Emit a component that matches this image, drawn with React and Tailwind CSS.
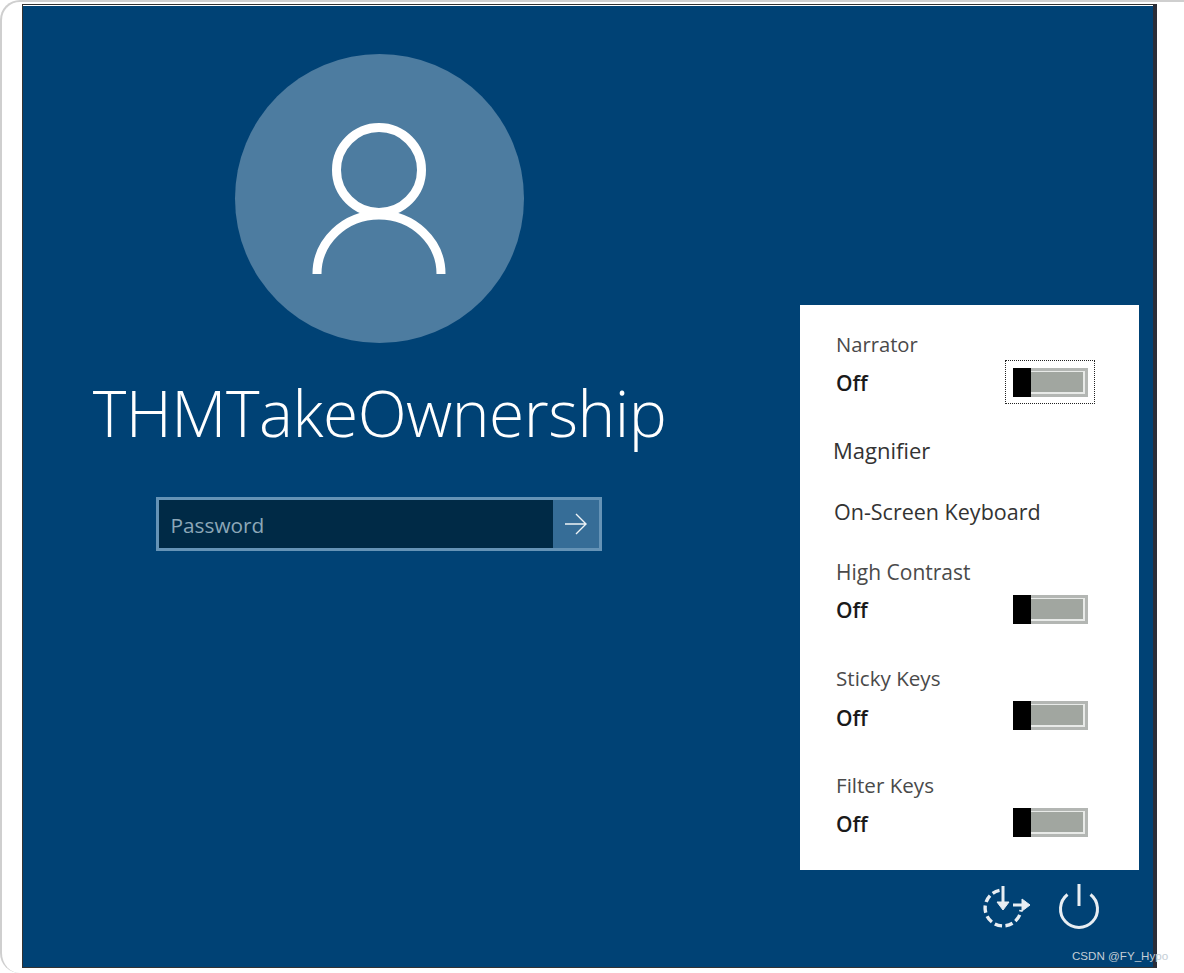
import React from "react";

function Toggle({ focus }) {
  return (
    <div className={"w-[90px] h-[44px] mb-[4px] flex items-center justify-center " + (focus ? "outline-1 outline-dotted outline-[#222] -outline-offset-[1px]" : "")}>
      <div className="relative w-[75px] h-[29px] border-[3px] border-[#b3b6b3] bg-[#e8eae8] p-[1.5px]">
        <div className="w-full h-full bg-[#a1a6a0]" />
        <div className="absolute -left-[3px] -top-[3px] w-[18px] h-[29px] bg-black" />
      </div>
    </div>
  );
}

function ToggleRow({ label, focus, className, labelClass, gapClass, offClass }) {
  return (
    <div className={"flex flex-col " + className}>
      <div className={"pl-[36px] leading-[28px] text-[#4a4a4a] " + labelClass}>{label}</div>
      <div className={"flex items-center justify-between pl-[36px] pr-[44px] h-[44px] " + gapClass}>
        <span className={"text-[21px] font-semibold text-[#1a1a1a] " + (offClass || "")}>Off</span>
        <Toggle focus={focus} />
      </div>
    </div>
  );
}

export default function App() {
  return (
    <div className="w-[1184px] h-[973px] bg-white overflow-hidden" style={{ fontFamily: '"Open Sans","Noto Sans",sans-serif' }}>
      <div className="h-[973px] rounded-l-[20px] border-l-[2px] border-t-[2px] border-[#cfcfcf] pl-[20px] pt-[2px]">
        <div className="w-[1135px] h-[964px] border-l border-t border-b border-r-[4px] border-l-[#333] border-t-[#333] border-b-[#333] border-r-[#2a2d38]">
          <div className="h-[1px] bg-white" />
          <div className="flex h-[961px] bg-[#004275]">
            <div className="w-[713px] flex flex-col items-center pt-[48px]">
              <div className="w-[289px] h-[289px] rounded-full bg-[#4d7ca0] flex items-center justify-center">
                <svg className="mr-[2px]" width="134" height="152" viewBox="0 0 134 152" fill="none" stroke="white" strokeWidth="9">
                  <circle cx="67" cy="47" r="42.5" />
                  <path d="M5 151 A62 59 0 0 1 129 151" />
                </svg>
              </div>
              <div className="mt-[28px] text-[64px] leading-[84px] font-light text-white tracking-[-0.5px] whitespace-nowrap">THMTakeOwnership</div>
              <div className="mt-[42px] mr-[2px] w-[446px] h-[54px] border-[3px] border-[#6593b6] flex">
                <div className="flex-1 bg-[#002a46] pl-[12px] pt-[4px] flex items-center text-[20.8px] text-[#8ca7b8]">Password</div>
                <div className="w-[46px] bg-[#366d97] flex items-center justify-center">
                  <svg width="26" height="24" viewBox="0 0 26 24" fill="none" stroke="#eef3f6" strokeWidth="1.4">
                    <path d="M2 12 H23 M13 2 L23 12 L13 22" />
                  </svg>
                </div>
              </div>
            </div>
            <div className="ml-[64px] w-[339px] pt-[299px] flex flex-col">
              <div className="h-[565px] bg-white flex flex-col pt-[25px]">
                <ToggleRow label="Narrator" focus labelClass="text-[20.2px]" gapClass="mt-[4px]" className="" />
                <div className="pl-[33px] mt-[30px] text-[22px] leading-[28px] text-[#333]">Magnifier</div>
                <div className="pl-[34px] mt-[34px] text-[21.5px] leading-[28px] text-[#333]">On-Screen Keyboard</div>
                <ToggleRow label="High Contrast" labelClass="text-[21px]" gapClass="mt-[3px]" className="mt-[32px]" />
                <ToggleRow label="Sticky Keys" labelClass="text-[20.6px]" gapClass="mt-[3px]" offClass="pt-[4px]" className="mt-[31px]" />
                <ToggleRow label="Filter Keys" labelClass="text-[20.6px]" gapClass="mt-[3px]" offClass="pt-[2px]" className="mt-[32px]" />
              </div>
              <div className="flex justify-end items-start gap-[27px] pr-[39px] mt-[13px]">
                <svg className="mt-[2px]" width="49" height="43" viewBox="0 0 49 43" fill="none" stroke="#e8eef3" strokeWidth="3.4">
                  <path d="M17.5 5.3 A18 18 0 1 0 39 25" strokeDasharray="7.5 3.5" />
                  <path d="M21 1 V21" strokeWidth="3" />
                  <path d="M15 17 L21 25 L27 17 Z" fill="#e8eef3" strokeWidth="1" />
                  <path d="M31 20 H42" strokeWidth="3" />
                  <path d="M40 14 L48 20 L40 26 Z" fill="#e8eef3" strokeWidth="1" />
                </svg>
                <svg width="42" height="47" viewBox="0 0 42 47" fill="none" stroke="#e8eef3" strokeWidth="3">
                  <path d="M9.5 11.5 A18.5 18.5 0 1 0 32.5 11.5" />
                  <path d="M21 1 V23" />
                </svg>
              </div>
            </div>
          </div>
        </div>
      </div>
      <div className="relative">
        <div className="absolute left-[1072px] -top-[24px] text-[11.6px] leading-[14px] text-[#c4ced6] whitespace-nowrap" style={{ fontFamily: '"Liberation Sans",sans-serif' }}>CSDN @FY_Hypo</div>
      </div>
    </div>
  );
}
